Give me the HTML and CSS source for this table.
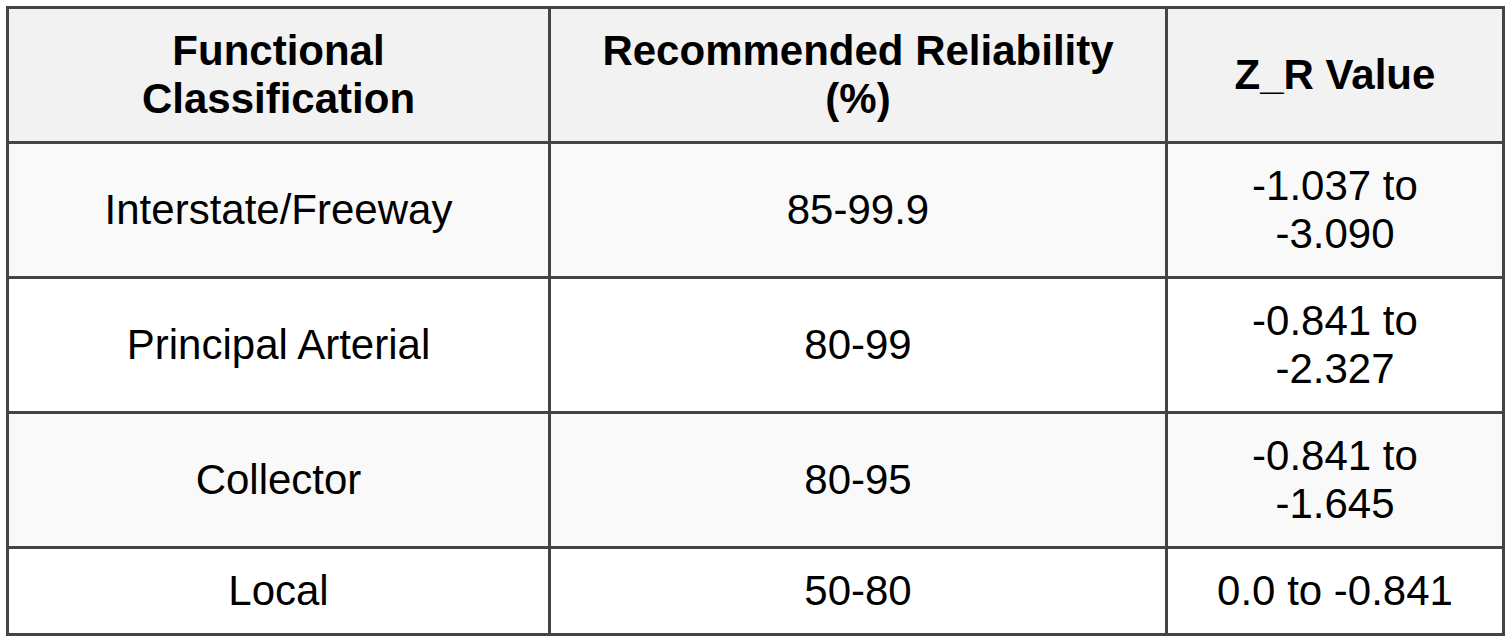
FILE: index.html
```html
<!DOCTYPE html>
<html lang="en">
<head>
<meta charset="utf-8">
<title>Reliability Table</title>
<link rel="stylesheet" href="styles.css">
</head>
<body>
<table class="data-table">
  <colgroup>
    <col class="col-class">
    <col class="col-rel">
    <col class="col-z">
  </colgroup>
  <thead>
    <tr>
      <th>Functional Classification</th>
      <th>Recommended Reliability (%)</th>
      <th>Z_R Value</th>
    </tr>
  </thead>
  <tbody>
    <tr>
      <td>Interstate/Freeway</td>
      <td>85-99.9</td>
      <td>-1.037 to -3.090</td>
    </tr>
    <tr>
      <td>Principal Arterial</td>
      <td>80-99</td>
      <td>-0.841 to -2.327</td>
    </tr>
    <tr>
      <td>Collector</td>
      <td>80-95</td>
      <td>-0.841 to -1.645</td>
    </tr>
    <tr>
      <td>Local</td>
      <td>50-80</td>
      <td>0.0 to -0.841</td>
    </tr>
  </tbody>
</table>
</body>
</html>
```
FILE: styles.css
```css
html, body {
  margin: 0;
  padding: 0;
  background: #ffffff;
}

body {
  padding: 6px;
  font-family: "Liberation Sans", Arial, sans-serif;
  color: #000000;
}

.data-table {
  border-collapse: separate;
  border-spacing: 0;
  table-layout: fixed;
  width: 1499px;
  border-top: 3px solid #444444;
  border-left: 3px solid #444444;
}

.col-class { width: 542px; }
.col-rel { width: 617px; }
.col-z { width: 337px; }

.data-table th,
.data-table td {
  border-right: 3px solid #444444;
  border-bottom: 3px solid #444444;
  padding: 18px 24px;
  text-align: center;
  vertical-align: middle;
  font-size: 42px;
  line-height: 48px;
}

.data-table th {
  background: #f2f2f2;
  font-weight: bold;
}

.data-table tbody tr:nth-child(odd) td {
  background: #f9f9f9;
}

.data-table tbody tr:nth-child(even) td {
  background: #ffffff;
}
```
